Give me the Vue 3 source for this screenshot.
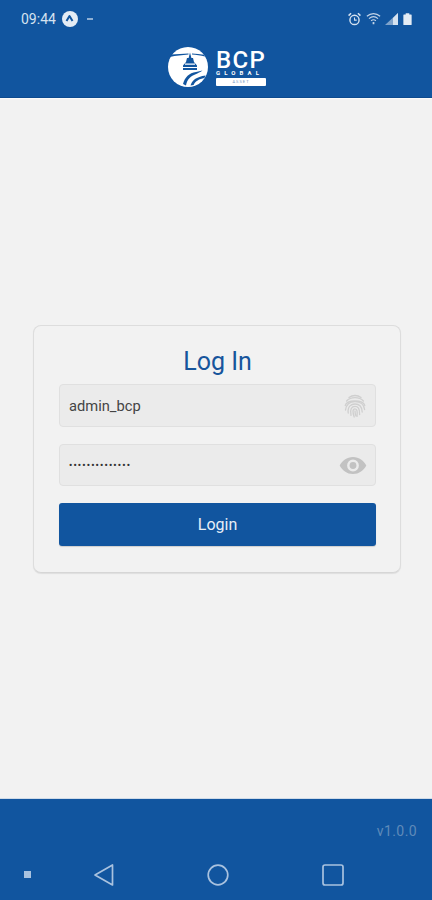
<template>
  <div class="screen">
    <header class="top">
      <div class="status-bar">
        <div class="status-left">
          <span class="clock">09:44</span>
          <span class="badge">
            <svg width="11" height="11" viewBox="0 0 11 11"><path d="M2.5 8 L5.5 3 L8.5 8" fill="none" stroke="#11559f" stroke-width="2" stroke-linejoin="round" /></svg>
          </span>
          <span class="dash"></span>
        </div>
        <div class="status-right">
          <svg width="15" height="16" viewBox="0 0 17 17" fill="none" stroke="#d5e2f0" stroke-width="1.6">
            <circle cx="8.5" cy="9.5" r="5.2" />
            <path d="M8.5 6.8 V9.8 H11" stroke-width="1.2" />
            <path d="M1.8 4.6 L4.6 2 M15.2 4.6 L12.4 2" stroke-width="1.8" />
          </svg>
          <svg width="15" height="15" viewBox="0 0 17 15" fill="none" stroke="#c3d4e7" stroke-width="1.3">
            <path d="M1 5 C5.5 1 11.5 1 16 5" />
            <path d="M3.4 7.6 C6.5 4.9 10.5 4.9 13.6 7.6" />
            <path d="M5.8 10 C7.5 8.6 9.5 8.6 11.2 10" />
            <path d="M8.5 11.5 V14" stroke-width="2" />
          </svg>
          <svg class="signal" width="13" height="12" viewBox="0 0 13 12"><path d="M13 0 V12 H0 Z" fill="#7fa3cb" /><path d="M13 0 V12 H8 V5 Z" fill="#d5e2f0" /></svg>
          <svg class="battery" width="9" height="14" viewBox="0 0 10 14"><path d="M3 0.5 H7 V2 H9 Q9.6 2 9.6 2.6 V13 Q9.6 13.6 9 13.6 H1 Q0.4 13.6 0.4 13 V2.6 Q0.4 2 1 2 H3 Z" fill="#e4ecf5" /></svg>
        </div>
      </div>
      <div class="logo">
        <svg class="logo-mark" width="40" height="40" viewBox="0 0 40 40">
          <circle cx="20" cy="20" r="20" fill="#fff" />
          <path d="M3 7.6 C9 7 15 6.6 20.5 6.4 L20.5 7.6 C14 8 8 8.8 1.8 10 Z" fill="#11559f" />
          <path d="M24 6.4 C28 6.6 32 7 36 7.8 L37 9.6 C33 8.6 28 8 24 7.6 Z" fill="#11559f" />
          <path d="M22 5.5 L23.4 11 L25 11 L26 15 L29 18.5 L29 23 L15 23 L15 18.5 L18 15 L19 11 L20.6 11 Z" fill="#11559f" />
          <path d="M17 16.6 H27 V17.8 H17 Z M15 20 H29 V21 H15 Z" fill="#fff" />
          <path d="M15 37 C17 30 21 26 28 25 L34.5 23.6 C30 27 25 27.6 21.6 31 C19.6 33 18.6 35.4 18 38.4 Z" fill="#11559f" />
          <path d="M22.5 38.6 C24 33.4 28 30 37.6 28.6 L36.4 31 C31 32 27.6 34 25.6 38 Z" fill="#11559f" />
        </svg>
        <div class="logo-text">
          <div class="logo-bcp">BCP</div>
          <div class="logo-global">GLOBAL</div>
          <div class="logo-pill">ASSET</div>
        </div>
      </div>
    </header>

    <main class="content">
      <section class="card">
        <h1 class="title">Log In</h1>
        <div class="field">
          <span class="value">admin_bcp</span>
          <svg width="22" height="24" viewBox="0 0 22 24" fill="none" stroke="#cfcfcf" stroke-width="1.3" stroke-linecap="round">
            <path d="M5 3.5 C8.5 0.8 13.5 0.8 17 3.5" />
            <path d="M2.6 7 C6.5 2.6 15.5 2.6 19.4 7" />
            <path d="M1.2 11.5 C3 5.5 19 5.5 20.8 11.5" />
            <path d="M1.5 16 C2.4 9 7 7.6 11 7.6 C15.5 7.6 20 10 20.6 15.5" />
            <path d="M4.2 19 C3.4 12 7.4 10 11 10 C15 10 18 12.5 18.2 18" />
            <path d="M7 21.4 C5.6 15 7.8 12.4 11 12.4 C14 12.4 15.8 14.5 15.6 20.5" />
            <path d="M10.2 23 C8.4 18 8.6 14.8 11 14.8 C13.4 14.8 13.4 18 13 22.4" />
            <path d="M11 17 C11 19 11.4 20.6 12 22" />
          </svg>
        </div>
        <div class="field password">
          <span class="value dots">••••••••••••••</span>
          <svg class="eye" width="28" height="19" viewBox="0 0 29 20">
            <path fill-rule="evenodd" fill="#c2c2c2" d="M14.5 1 C21 1 26 5 28.5 10 C26 15 21 19 14.5 19 C8 19 3 15 0.5 10 C3 5 8 1 14.5 1 Z M14.5 3.8 A6.2 6.2 0 1 0 14.5 16.2 A6.2 6.2 0 1 0 14.5 3.8 Z" />
            <circle cx="14.5" cy="10" r="3.6" fill="#c2c2c2" />
          </svg>
        </div>
        <button class="login" type="button">Login</button>
      </section>
    </main>

    <footer class="bottom">
      <div class="version">v1.0.0</div>
      <nav class="nav">
        <span class="nav-dot"></span>
        <svg class="nav-back" width="22" height="24" viewBox="0 0 22 24" fill="none" stroke="#a9c2df" stroke-width="1.7" stroke-linejoin="round"><path d="M19.5 2 V22 L2 12 Z" /></svg>
        <svg class="nav-home" width="22" height="22" viewBox="0 0 22 22" fill="none" stroke="#a9c2df" stroke-width="1.7"><circle cx="11" cy="11" r="9.8" /></svg>
        <svg class="nav-recent" width="22" height="22" viewBox="0 0 22 22" fill="none" stroke="#a9c2df" stroke-width="1.7"><rect x="1" y="1" width="20" height="20" rx="2" /></svg>
      </nav>
    </footer>
  </div>
</template>

<script setup>
</script>

<style>
html,
body {
  margin: 0;
  background: #f2f2f2;
}
</style>

<style scoped>
.screen {
  width: 432px;
  height: 900px;
  display: flex;
  flex-direction: column;
  background: #f2f2f2;
  font-family: Roboto, "Liberation Sans", sans-serif;
  overflow: hidden;
}

.top {
  height: 98px;
  box-sizing: border-box;
  background: #11559f;
  border-bottom: 1px solid #0d4a8e;
  box-shadow: 0 1px 1px #fafafa;
  flex-shrink: 0;
}

.status-bar {
  height: 37px;
  box-sizing: border-box;
  padding: 0 20px 0 21px;
  display: flex;
  align-items: center;
  justify-content: space-between;
}

.status-left,
.status-right {
  display: flex;
  align-items: center;
}

.clock {
  color: #d5e2f0;
  font-size: 14px;
  margin-right: 6px;
}

.badge {
  width: 16px;
  height: 16px;
  border-radius: 50%;
  background: #e4ecf5;
  display: flex;
  align-items: center;
  justify-content: center;
}

.dash {
  width: 6px;
  height: 2px;
  margin-left: 9px;
  background: #8fafd3;
}

.status-right {
  gap: 4px;
}

.battery {
  margin-left: 1px;
}

.logo {
  display: flex;
  align-items: center;
  gap: 8px;
  margin-top: 10px;
  padding-left: 168px;
}

.logo-mark {
  flex-shrink: 0;
}

.logo-text {
  width: 50px;
  color: #fff;
  display: flex;
  flex-direction: column;
  padding-top: 3px;
}

.logo-bcp {
  font-size: 24px;
  font-weight: 500;
  line-height: 18px;
  height: 18px;
  letter-spacing: 1.4px;
}

.logo-global {
  font-size: 6px;
  line-height: 6px;
  letter-spacing: 4.1px;
  font-weight: 700;
  margin-top: 1px;
  white-space: nowrap;
}

.logo-pill {
  height: 8px;
  margin-top: 2px;
  background: #fff;
  border-radius: 1px;
  color: #6f95c0;
  font-size: 4px;
  line-height: 8px;
  letter-spacing: 1px;
  text-align: center;
}

.content {
  flex: 1;
  display: flex;
  align-items: center;
  justify-content: center;
  padding: 2px 0 0 2px;
}

.card {
  width: 368px;
  height: 248px;
  box-sizing: border-box;
  padding: 20px 24px 0 25px;
  background: #f2f2f2;
  border: 1px solid #dddddd;
  border-bottom-color: #d6d6d6;
  border-radius: 8px;
  box-shadow: 0 1px 1px rgba(0, 0, 0, 0.08);
}

.title {
  margin: 0 0 6px;
  color: #17559c;
  font-size: 25px;
  font-weight: 400;
  line-height: 32px;
  text-align: center;
}

.field {
  height: 43px;
  box-sizing: border-box;
  padding: 0 9px;
  margin-bottom: 17px;
  display: flex;
  align-items: center;
  justify-content: space-between;
  background: #ebebeb;
  border: 1px solid #e0e0e0;
  border-radius: 4px;
}

.field.password {
  height: 42px;
  padding-right: 8px;
}

.value {
  color: #444;
  font-size: 14.7px;
}

.dots {
  color: #333;
  font-size: 9px;
  letter-spacing: 1.2px;
  font-weight: 700;
}

.login {
  display: block;
  width: 100%;
  height: 43px;
  border: none;
  border-radius: 3px;
  background: #11559f;
  color: #e8eff7;
  font-family: inherit;
  font-size: 16px;
  padding: 0;
  box-shadow: 0 1px 1px rgba(0, 0, 0, 0.15);
}

.bottom {
  height: 102px;
  box-sizing: border-box;
  flex-shrink: 0;
  background: #11559f;
  border-top: 1px solid #cfdbe8;
  display: flex;
  flex-direction: column;
}

.version {
  margin-top: 24px;
  padding-right: 15px;
  text-align: right;
  color: #5f8ab9;
  font-size: 14px;
  line-height: 16px;
  letter-spacing: 0.4px;
}

.nav {
  position: relative;
  margin-top: 23px;
  height: 26px;
}

.nav-dot,
.nav-back,
.nav-home,
.nav-recent {
  position: absolute;
}

.nav-dot {
  left: 24px;
  top: 9px;
  width: 7px;
  height: 7px;
  background: #a9c2df;
}

.nav-back {
  left: 93px;
  top: 1px;
}

.nav-home {
  left: 207px;
  top: 2px;
}

.nav-recent {
  left: 322px;
  top: 2px;
}
</style>
